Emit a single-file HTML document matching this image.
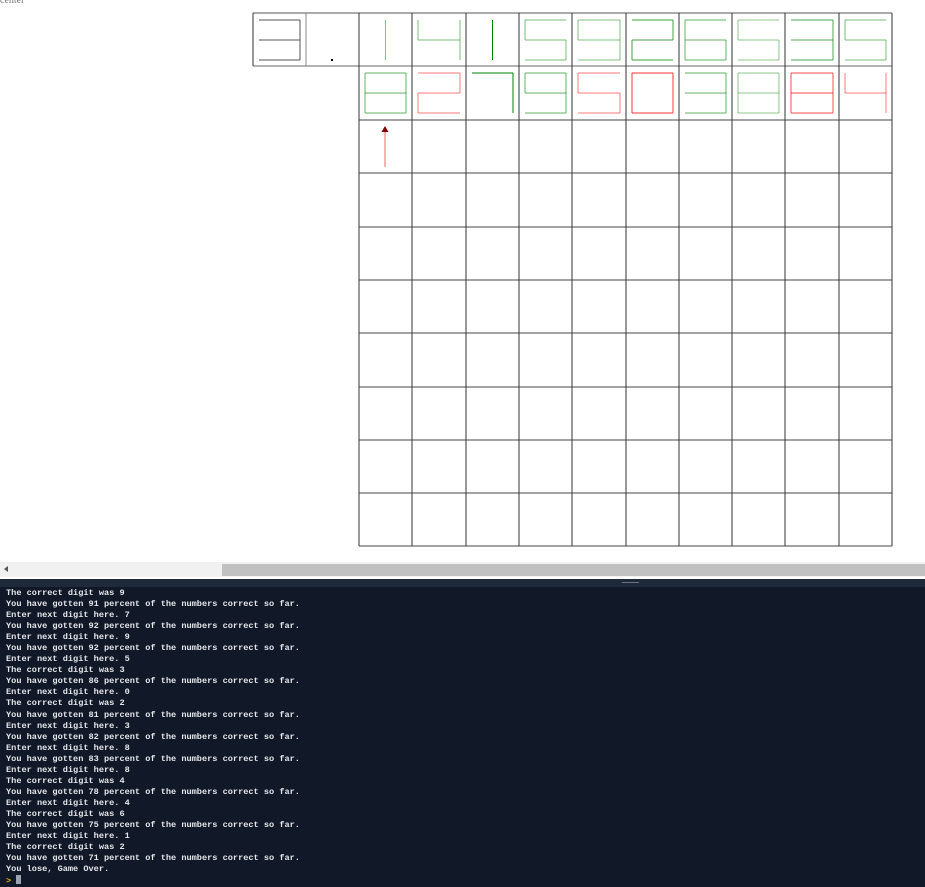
<!DOCTYPE html>
<html><head><meta charset="utf-8"><style>
html,body{margin:0;padding:0;width:925px;height:887px;overflow:hidden;background:#fff;position:relative}
#top{position:absolute;left:0;top:-5px;font:10px "Liberation Serif",serif;color:#777}
svg{position:absolute;left:0;top:0}
#track{position:absolute;left:0;top:562px;width:925px;height:15px;background:#f1f1f1}
#thumb{position:absolute;left:222px;top:564px;width:703px;height:12px;background:#c1c1c1}
#arr{position:absolute;left:4px;top:566px;width:0;height:0;border-top:3px solid transparent;border-bottom:3px solid transparent;border-right:4px solid #555}
#hdr{position:absolute;left:0;top:579px;width:925px;height:8px;background:#1e293b}
#handle{position:absolute;left:622px;top:582px;width:17px;height:1px;background:#6b7280}
#con{position:absolute;left:0;top:587px;width:925px;height:300px;background:#111827}
pre{margin:0;position:absolute;left:6px;top:1px;font:bold 8.6px/11.05px "Liberation Mono",monospace;color:#e5e7eb}
.p{color:#eab308}
.c{display:inline-block;width:5px;height:9px;background:#9ca3af;vertical-align:-1px}
</style></head><body>
<div id="top">center</div>
<svg id="s" width="925" height="560" xmlns="http://www.w3.org/2000/svg"></svg>
<div id="track"></div><div id="thumb"></div><div id="arr"></div>
<div id="hdr"></div><div id="handle"></div>
<div id="con"><pre>The correct digit was 9
You have gotten 91 percent of the numbers correct so far.
Enter next digit here. 7
You have gotten 92 percent of the numbers correct so far.
Enter next digit here. 9
You have gotten 92 percent of the numbers correct so far.
Enter next digit here. 5
The correct digit was 3
You have gotten 86 percent of the numbers correct so far.
Enter next digit here. 0
The correct digit was 2
You have gotten 81 percent of the numbers correct so far.
Enter next digit here. 3
You have gotten 82 percent of the numbers correct so far.
Enter next digit here. 8
You have gotten 83 percent of the numbers correct so far.
Enter next digit here. 8
The correct digit was 4
You have gotten 78 percent of the numbers correct so far.
Enter next digit here. 4
The correct digit was 6
You have gotten 75 percent of the numbers correct so far.
Enter next digit here. 1
The correct digit was 2
You have gotten 71 percent of the numbers correct so far.
You lose, Game Over.
<span class="p">&gt;</span> <span class="c"></span></pre></div>
<script>
var s=document.getElementById('s'),h='';
var X=[253,306,359,412,466,519,572,626,679,732,785,839,892];
var Y=[13,66,120,173,227,280,333,387,440,493,546];
function L(a,b,c,d,col,w,o){h+='<line x1="'+a+'" y1="'+b+'" x2="'+c+'" y2="'+d+'" stroke="'+col+'" stroke-width="'+(w||1)+'" opacity="'+(o||1)+'"/>';}
L(253,13,892,13,'#555');L(253,66,892,66,'#666');L(253,13,253,66,'#333');L(306,13,306,66,'#888');
for(var i=2;i<13;i++)L(X[i],13,X[i],546,'#333');
for(var j=2;j<11;j++)L(359,Y[j],892,Y[j],'#444');
var SEG={0:'abcdef',2:'abged',3:'abgcd',4:'fgbc',5:'afgcd',6:'afedcg',7:'abc',8:'abcdefg',9:'abcdfg'};
function dig(ci,ri,d,col,o){var x0=X[ci]+6,x1=X[ci+1]-6,y0=Y[ri]+7,ym=Y[ri]+27,y1=Y[ri]+47;
 if(d===1){var cx=(X[ci]+X[ci+1])/2;L(cx,y0,cx,y1,col,1,o);return;}
 var sg=SEG[d];for(var k=0;k<sg.length;k++){var c=sg[k];
 if(c=='a')L(x0,y0,x1,y0,col,1,o);if(c=='g')L(x0,ym,x1,ym,col,1,o);if(c=='d')L(x0,y1,x1,y1,col,1,o);
 if(c=='b')L(x1,y0,x1,ym,col,1,o);if(c=='c')L(x1,ym,x1,y1,col,1,o);
 if(c=='f')L(x0,y0,x0,ym,col,1,o);if(c=='e')L(x0,ym,x0,y1,col,1,o);}}
var G='#2f9a2f',DG='#008000',R='#ff2020';
dig(0,0,3,'#555',1);
h+='<rect x="331" y="59" width="2" height="2" fill="#000"/>';
var r1=[1,4,1,5,9,2,6,5,3,5],o1=[.6,.65,1,.65,.6,.9,.75,.55,.85,.65];
for(var i=0;i<10;i++)dig(i+2,0,r1[i],(o1[i]==1?DG:G),o1[i]);
var r2=[8,2,7,9,5,0,3,8,8,4],c2=[G,R,DG,G,R,R,G,G,R,R],o2=[.75,.6,1,.75,.6,.9,.75,.55,.8,.6];
for(var i=0;i<10;i++)dig(i+2,1,r2[i],c2[i],o2[i]);
L(385,131,385,167,'#ff6060');
h+='<polygon points="385,126 381.5,132 388.5,132" fill="#800000"/>';
s.innerHTML=h;
</script>
</body></html>
